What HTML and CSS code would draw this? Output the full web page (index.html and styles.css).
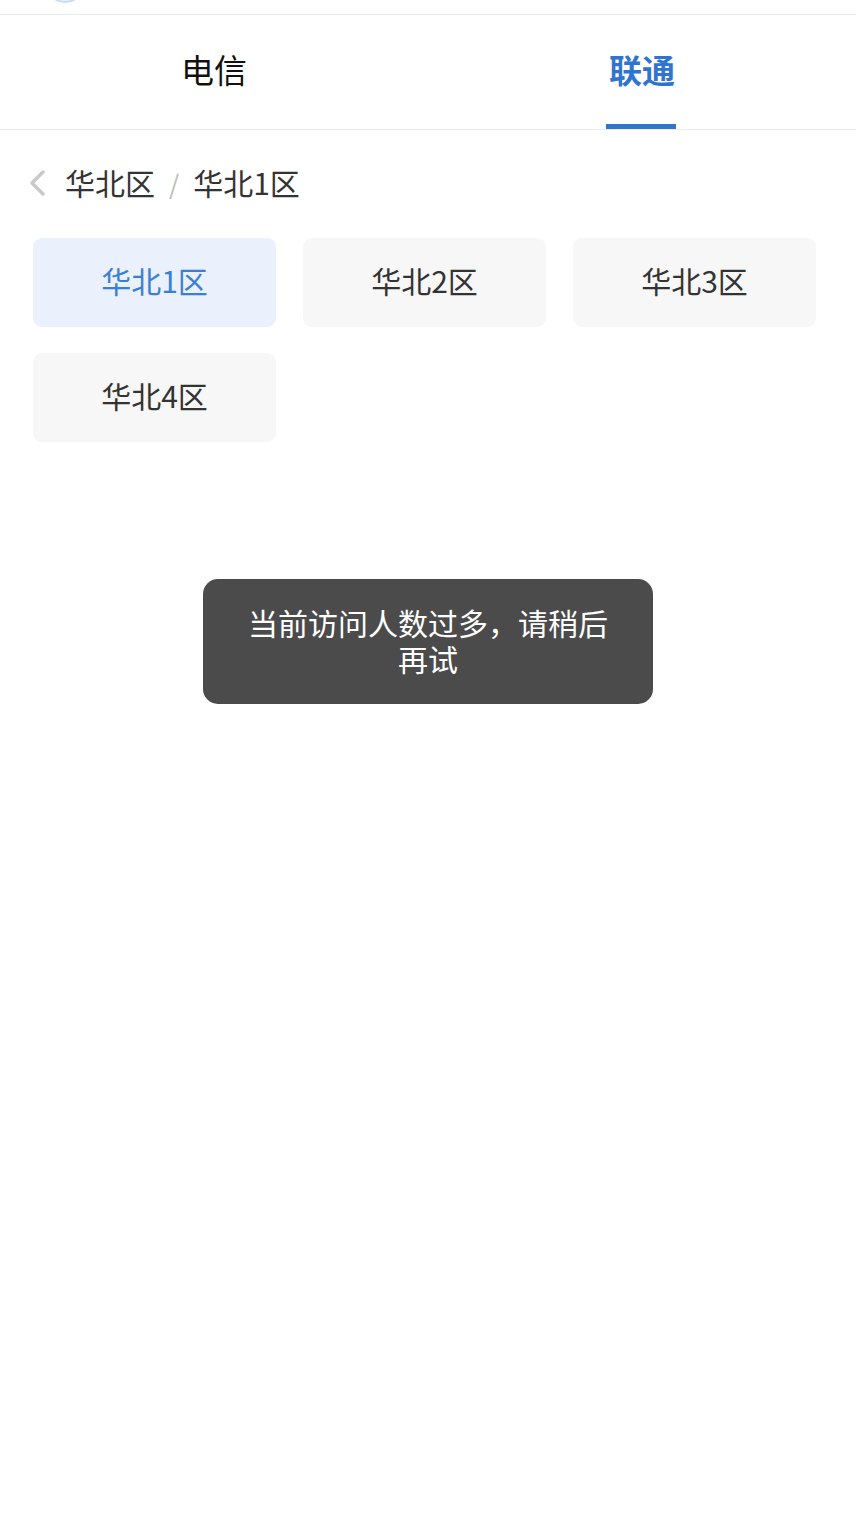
FILE: index.html
```html
<!DOCTYPE html>
<html lang="zh-CN">
<head>
<meta charset="utf-8">
<title>线路选择</title>
<link rel="stylesheet" href="styles.css">
</head>
<body>
<div class="page">
  <div class="topbar"><div class="avatar"></div></div>
  <div class="tabs">
    <div class="tab">电信</div>
    <div class="tab active">联通</div>
  </div>
  <div class="crumbs">
    <svg class="back" width="20" height="30" viewBox="0 0 20 30"><path d="M16 4 L5 15 L16 26" fill="none" stroke="#c9c9c9" stroke-width="3.5" stroke-linecap="round" stroke-linejoin="round"/></svg>
    <span class="crumb">华北区</span>
    <span class="sep">/</span>
    <span class="crumb">华北1区</span>
  </div>
  <div class="grid">
    <div class="zone active">华北1区</div>
    <div class="zone">华北2区</div>
    <div class="zone">华北3区</div>
    <div class="zone">华北4区</div>
  </div>
  <div class="toast">当前访问人数过多，请稍后再试</div>
</div>
</body>
</html>
```
FILE: styles.css
```css
html, body {
  margin: 0;
  padding: 0;
  background: #fff;
}
body {
  font-family: "Noto Sans CJK SC", "Noto Sans", sans-serif;
  color: #333;
}
.page {
  position: relative;
  width: 856px;
  min-height: 1522px;
}
.topbar {
  height: 14px;
  border-bottom: 1px solid #ececec;
  overflow: hidden;
  padding-left: 45px;
}
.avatar {
  width: 40px;
  height: 40px;
  margin-top: -37px;
  border-radius: 50%;
  background: #eaf2fa;
  border: 2px solid #c7dcee;
  box-sizing: border-box;
}
.tabs {
  display: flex;
  height: 114px;
  border-bottom: 1px solid #ececec;
}
.tab {
  flex: 1;
  display: flex;
  align-items: center;
  justify-content: center;
  padding-bottom: 6px;
  font-size: 33px;
  color: #111;
  position: relative;
}
.tab.active {
  color: #2f74d1;
  font-weight: 700;
}
.tab.active::after {
  content: "";
  position: absolute;
  bottom: 0;
  left: 50%;
  width: 70px;
  margin-left: -36px;
  height: 5px;
  background: #2f74d1;
}
.crumbs {
  display: flex;
  align-items: center;
  height: 108px;
  padding-bottom: 4px;
  box-sizing: border-box;
  padding-left: 27px;
  font-size: 30px;
  color: #333;
}
.back {
  margin-right: 18px;
  margin-top: 2px;
}
.sep {
  color: #bbb;
  font-size: 26px;
  margin: 0 14px 0 14px;
}
.grid {
  display: grid;
  grid-template-columns: repeat(3, 243px);
  column-gap: 27px;
  row-gap: 26px;
  padding-left: 33px;
}
.zone {
  height: 89px;
  box-sizing: border-box;
  padding-bottom: 5px;
  border-radius: 9px;
  background: #f7f7f7;
  display: flex;
  align-items: center;
  justify-content: center;
  font-size: 30px;
  color: #333;
}
.zone.active {
  background: #eaf1fd;
  color: #3a7fd6;
}
.toast {
  position: absolute;
  left: 203px;
  top: 579px;
  width: 450px;
  height: 125px;
  box-sizing: border-box;
  padding: 25px 44px;
  border-radius: 15px;
  background: #4b4b4b;
  color: #fff;
  font-size: 30px;
  line-height: 36px;
  text-align: center;
}
```
